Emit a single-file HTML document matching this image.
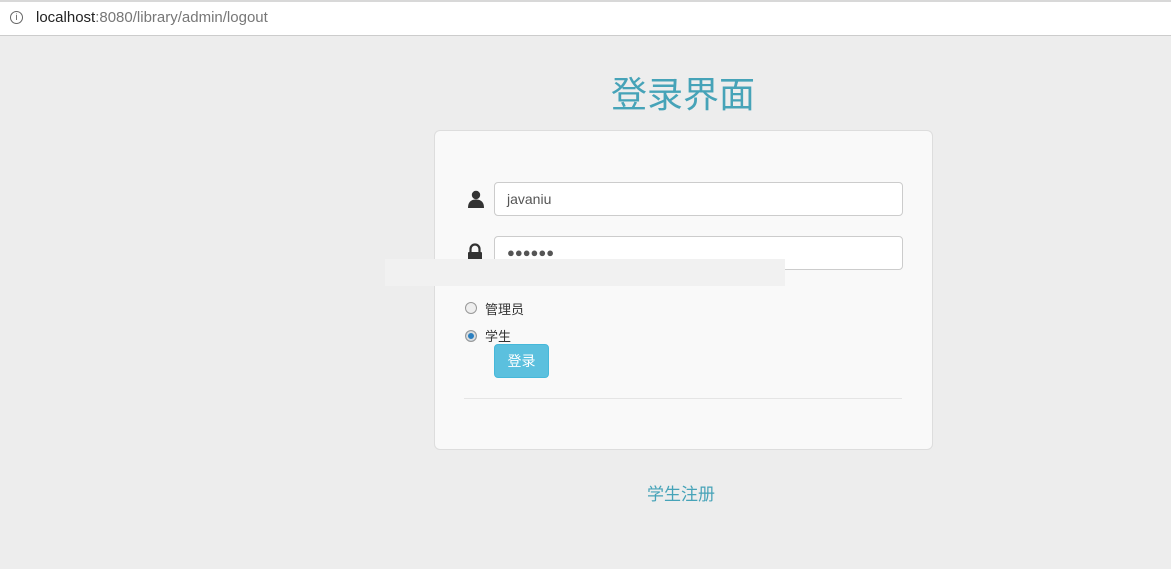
<!DOCTYPE html>
<html><head><meta charset="utf-8"><style>
body{margin:0;width:1171px;height:569px;background:#ededed;position:relative;overflow:hidden;font-family:"Liberation Sans","Noto Sans CJK SC",sans-serif}
.bar{position:absolute;left:0;top:0;width:1171px;height:36px;background:#fff;border-top:2px solid #d8d8d8;border-bottom:1px solid #ccc;box-sizing:border-box}
.url{position:absolute;left:36px;top:7px;font-size:15px;color:#777}
.url b{font-weight:normal;color:#222}
.info{position:absolute;left:10px;top:9px;width:11px;height:11px;border:1.3px solid #666;border-radius:50%;font-size:9px;text-align:center;line-height:11px;color:#555}
.a{position:absolute}
h1{position:absolute;margin:0;top:66px;left:0;text-align:center;font-weight:normal;font-size:36px;color:#46a3b8;width:1366px}
.panel{position:absolute;left:434px;top:130px;width:499px;height:320px;background:#f9f9f9;border:1px solid #ddd;border-radius:6px;box-sizing:border-box}
.inp{position:absolute;left:494px;width:409px;height:34px;background:#fff;border:1px solid #ccc;border-radius:4px;box-sizing:border-box;font-size:14px;color:#555;padding:8px 12px}
.btn{position:absolute;left:494px;top:344px;width:55px;height:34px;background:#5bc0de;border:1px solid #46b8da;border-radius:4px;box-sizing:border-box;color:#fff;font-size:14px;text-align:center;line-height:32px}
.radio{position:absolute;left:465px;width:10px;height:10px;border:1px solid #999;border-radius:50%;background:#eee}
.lbl{position:absolute;left:485px;font-size:13px;color:#333}
</style></head><body>
<div class="bar"><div class="info">i</div><div class="url"><b>localhost</b>:8080/library/admin/logout</div></div>
<h1>登录界面</h1>
<div class="panel"></div>
<svg class="a" style="left:467px;top:190px" width="18" height="18" viewBox="0 0 18 18"><circle cx="9" cy="5" r="4.2" fill="#333"/><path d="M1 18 Q1 9.5 9 9.5 Q17 9.5 17 18Z" fill="#333"/></svg>
<div class="inp" style="top:182px">javaniu</div>
<svg class="a" style="left:467px;top:243px" width="16" height="20" viewBox="0 0 16 20"><path d="M3.5 9V6a4.5 4.5 0 0 1 9 0v3" stroke="#333" stroke-width="2.2" fill="none"/><rect x="1" y="9" width="14" height="11" rx="1" fill="#333"/></svg>
<div class="inp" style="top:236px;font-size:13px;padding-top:8px;letter-spacing:0;color:#555">●●●●●●</div>
<div class="a" style="left:385px;top:259px;width:400px;height:27px;background:#f1f1f1"></div>
<div class="radio" style="top:302px"></div><div class="lbl" style="top:299px">管理员</div>
<div class="radio" style="top:330px;background:#2a7fc0;box-shadow:inset 0 0 0 2px #ddd"></div><div class="lbl" style="top:326px">学生</div>
<div class="btn">登录</div>
<div class="a" style="left:464px;top:398px;width:438px;height:1px;background:#e5e5e5"></div>
<div class="a" style="left:647px;top:480px;font-size:17px;color:#46a3b8">学生注册</div>
</body></html>
